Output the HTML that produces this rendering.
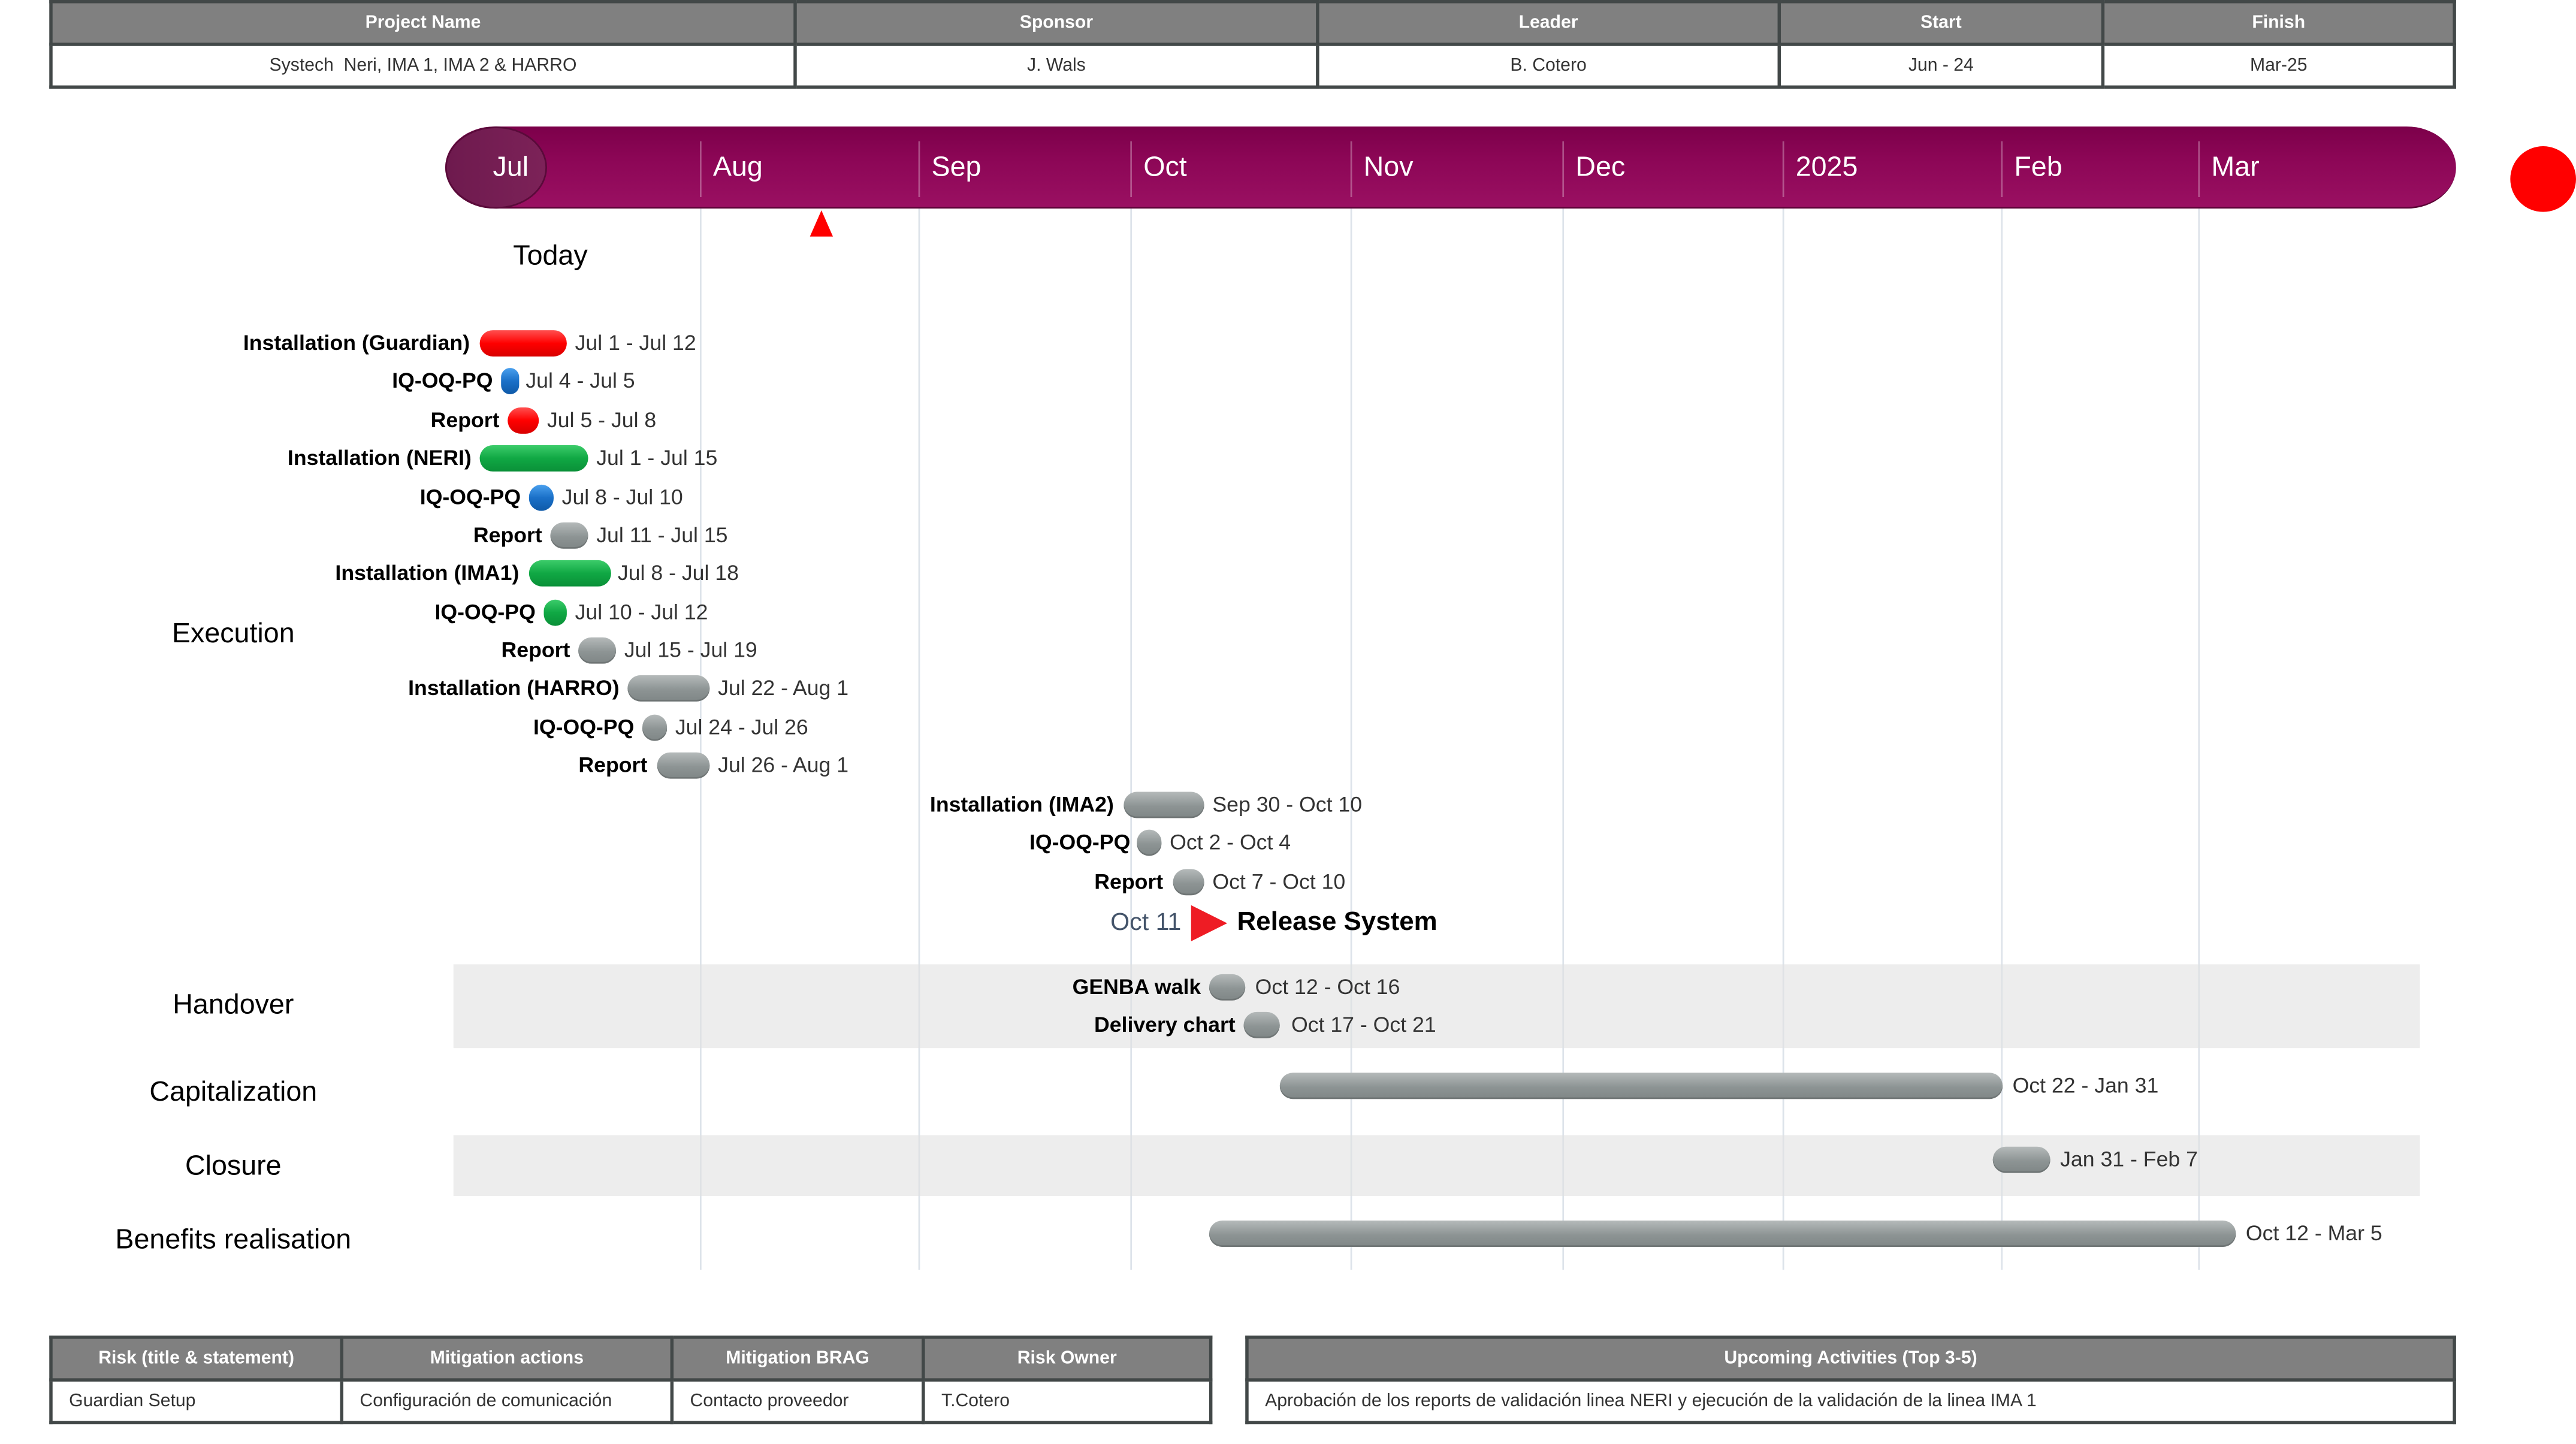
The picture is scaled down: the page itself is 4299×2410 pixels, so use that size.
<!DOCTYPE html>
<html><head><meta charset="utf-8"><style>
html,body{margin:0;padding:0;background:#fff;overflow:hidden}
body{width:4299px;height:2410px;position:relative}
#w{position:absolute;left:0;top:0;width:1568px;height:879px;transform:scale(2.74171,2.74175);transform-origin:0 0;font-family:"Liberation Sans",sans-serif}
#w div{position:absolute;box-sizing:border-box}
table{position:absolute;border-collapse:collapse;font-family:"Liberation Sans",sans-serif;font-size:11px}
td,th{border:2px solid #424848;height:26px;padding:0 10px;box-sizing:border-box}
th{background:#808080;color:#fff;font-weight:bold;font-size:11px}
td{color:#333}
.g{width:1px;background:#dde3ea;top:127px;height:646px}
.m{color:#fff;font-size:17px;top:91px;line-height:22px}
.ms{width:1px;background:rgba(255,255,255,.3);top:86px;height:34px}
.l{font-weight:bold;font-size:13px;color:#000;text-align:right;line-height:16px;height:16px;white-space:nowrap}
.d{font-size:13px;color:#333;line-height:16px;height:16px;white-space:nowrap}
.b{height:16px;border-radius:8px}
.gr{background:linear-gradient(#b5baba,#8d9494 55%,#7f8686);box-shadow:inset 0 -1px 0 #6f7575}
.rd{background:linear-gradient(#ff5050,#f00 50%,#d80000)}
.gn{background:linear-gradient(#3ccc6a,#10a844 50%,#0a9038)}
.bl{background:linear-gradient(#4aa0ee,#1a70c8 50%,#0f5aa8)}
.s{font-size:17px;color:#000;text-align:center;width:200px;line-height:22px}
</style></head><body><div id="w">

<table style="left:30px;top:0;width:1465px">
<tr><th style="width:453px">Project Name</th><th style="width:318px">Sponsor</th><th style="width:281px">Leader</th><th style="width:197px">Start</th><th>Finish</th></tr>
<tr style="text-align:center"><td>Systech &nbsp;Neri, IMA 1, IMA 2 &amp; HARRO</td><td>J. Wals</td><td>B. Cotero</td><td>Jun - 24</td><td>Mar-25</td></tr>
</table>

<div class="g" style="left:426px"></div><div class="g" style="left:559px"></div><div class="g" style="left:688px"></div><div class="g" style="left:822px"></div><div class="g" style="left:951px"></div><div class="g" style="left:1085px"></div><div class="g" style="left:1218px"></div><div class="g" style="left:1338px"></div>

<div style="left:276px;top:587px;width:1197px;height:51px;background:rgba(225,225,225,.6)"></div>
<div style="left:276px;top:691px;width:1197px;height:37px;background:rgba(225,225,225,.6)"></div>

<div style="left:271px;top:77px;width:1224px;height:50px;border-radius:30px/25px;background:linear-gradient(#7c004a,#8c0656 40%,#9a1062);border-bottom:1px solid #5a0035"></div>
<div style="left:271px;top:77px;width:62px;height:50px;border-radius:50%;background:linear-gradient(90deg,#6e1a4e,#7c2258);border:1px solid #5a0a3a"></div>
<div class="ms" style="left:426px"></div><div class="ms" style="left:559px"></div><div class="ms" style="left:688px"></div><div class="ms" style="left:822px"></div><div class="ms" style="left:951px"></div><div class="ms" style="left:1085px"></div><div class="ms" style="left:1218px"></div><div class="ms" style="left:1338px"></div>
<div class="m" style="left:300px">Jul</div><div class="m" style="left:434px">Aug</div><div class="m" style="left:567px">Sep</div><div class="m" style="left:696px">Oct</div><div class="m" style="left:830px">Nov</div><div class="m" style="left:959px">Dec</div><div class="m" style="left:1093px">2025</div><div class="m" style="left:1226px">Feb</div><div class="m" style="left:1346px">Mar</div>
<div style="left:1528px;top:89px;width:40px;height:40px;border-radius:50%;background:#f00"></div>
<div style="left:493px;top:128px;width:0;height:0;border-left:7px solid transparent;border-right:7px solid transparent;border-bottom:16px solid #f00"></div>
<div style="left:295px;top:145px;width:80px;text-align:center;font-size:17px;line-height:22px">Today</div>

<div class="l" style="right:1282px;top:201px">Installation (Guardian)</div><div class="b rd" style="left:292px;top:201px;width:53px"></div><div class="d" style="left:350px;top:201px">Jul 1 - Jul 12</div>
<div class="l" style="right:1268px;top:224px">IQ-OQ-PQ</div><div class="b bl" style="left:305px;top:224px;width:11px"></div><div class="d" style="left:320px;top:224px">Jul 4 - Jul 5</div>
<div class="l" style="right:1264px;top:248px">Report</div><div class="b rd" style="left:309px;top:248px;width:19px"></div><div class="d" style="left:333px;top:248px">Jul 5 - Jul 8</div>
<div class="l" style="right:1281px;top:271px">Installation (NERI)</div><div class="b gn" style="left:292px;top:271px;width:66px"></div><div class="d" style="left:363px;top:271px">Jul 1 - Jul 15</div>
<div class="l" style="right:1251px;top:295px">IQ-OQ-PQ</div><div class="b bl" style="left:322px;top:295px;width:15px"></div><div class="d" style="left:342px;top:295px">Jul 8 - Jul 10</div>
<div class="l" style="right:1238px;top:318px">Report</div><div class="b gr" style="left:335px;top:318px;width:23px"></div><div class="d" style="left:363px;top:318px">Jul 11 - Jul 15</div>
<div class="l" style="right:1252px;top:341px">Installation (IMA1)</div><div class="b gn" style="left:322px;top:341px;width:50px"></div><div class="d" style="left:376px;top:341px">Jul 8 - Jul 18</div>
<div class="l" style="right:1242px;top:365px">IQ-OQ-PQ</div><div class="b gn" style="left:331px;top:365px;width:14px"></div><div class="d" style="left:350px;top:365px">Jul 10 - Jul 12</div>
<div class="l" style="right:1221px;top:388px">Report</div><div class="b gr" style="left:352px;top:388px;width:23px"></div><div class="d" style="left:380px;top:388px">Jul 15 - Jul 19</div>
<div class="l" style="right:1191px;top:411px">Installation (HARRO)</div><div class="b gr" style="left:382px;top:411px;width:50px"></div><div class="d" style="left:437px;top:411px">Jul 22 - Aug 1</div>
<div class="l" style="right:1182px;top:435px">IQ-OQ-PQ</div><div class="b gr" style="left:391px;top:435px;width:15px"></div><div class="d" style="left:411px;top:435px">Jul 24 - Jul 26</div>
<div class="l" style="right:1174px;top:458px">Report</div><div class="b gr" style="left:400px;top:458px;width:32px"></div><div class="d" style="left:437px;top:458px">Jul 26 - Aug 1</div>
<div class="l" style="right:890px;top:482px">Installation (IMA2)</div><div class="b gr" style="left:684px;top:482px;width:49px"></div><div class="d" style="left:738px;top:482px">Sep 30 - Oct 10</div>
<div class="l" style="right:880px;top:505px">IQ-OQ-PQ</div><div class="b gr" style="left:692px;top:505px;width:15px"></div><div class="d" style="left:712px;top:505px">Oct 2 - Oct 4</div>
<div class="l" style="right:860px;top:529px">Report</div><div class="b gr" style="left:714px;top:529px;width:19px"></div><div class="d" style="left:738px;top:529px">Oct 7 - Oct 10</div>
<div class="d" style="right:849px;top:553px;font-size:15px;color:#44546a;line-height:18px;height:18px">Oct 11</div>
<div style="left:725px;top:551px;width:0;height:0;border-top:11px solid transparent;border-bottom:11px solid transparent;border-left:22px solid #ee1c24"></div>
<div class="l" style="left:753px;top:552px;font-size:16px;line-height:20px;height:20px;text-align:left">Release System</div>

<div class="l" style="right:837px;top:593px">GENBA walk</div><div class="b gr" style="left:736px;top:593px;width:22px"></div><div class="d" style="left:764px;top:593px">Oct 12 - Oct 16</div>
<div class="l" style="right:816px;top:616px">Delivery chart</div><div class="b gr" style="left:757px;top:616px;width:22px"></div><div class="d" style="left:786px;top:616px">Oct 17 - Oct 21</div>
<div class="b gr" style="left:779px;top:653px;width:440px"></div><div class="d" style="left:1225px;top:653px">Oct 22 - Jan 31</div>
<div class="b gr" style="left:1213px;top:698px;width:35px"></div><div class="d" style="left:1254px;top:698px">Jan 31 - Feb 7</div>
<div class="b gr" style="left:736px;top:743px;width:625px"></div><div class="d" style="left:1367px;top:743px">Oct 12 - Mar 5</div>

<div class="s" style="left:42px;top:375px">Execution</div>
<div class="s" style="left:42px;top:601px">Handover</div>
<div class="s" style="left:42px;top:654px">Capitalization</div>
<div class="s" style="left:42px;top:699px">Closure</div>
<div class="s" style="left:42px;top:744px">Benefits realisation</div>

<table style="left:30px;top:813px;width:708px">
<tr><th style="width:177px">Risk (title &amp; statement)</th><th style="width:201px">Mitigation actions</th><th style="width:153px">Mitigation BRAG</th><th>Risk Owner</th></tr>
<tr><td>Guardian Setup</td><td>Configuración de comunicación</td><td>Contacto proveedor</td><td>T.Cotero</td></tr>
</table>
<table style="left:758px;top:813px;width:737px">
<tr><th>Upcoming Activities (Top 3-5)</th></tr>
<tr><td>Aprobación de los reports de validación linea NERI y ejecución de la validación de la linea IMA 1</td></tr>
</table>
</div></body></html>
